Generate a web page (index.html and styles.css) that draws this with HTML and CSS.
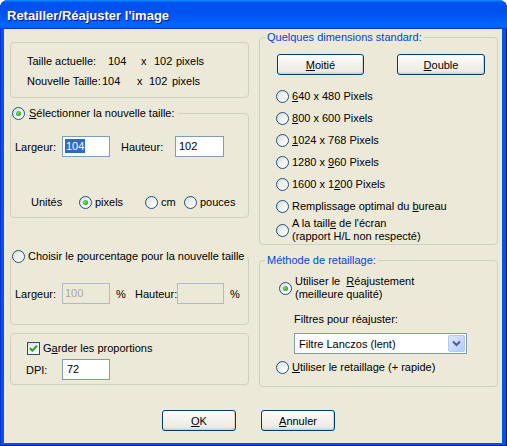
FILE: index.html
```html
<!DOCTYPE html>
<html lang="fr">
<head>
<meta charset="utf-8">
<title>Retailler/Réajuster l'image</title>
<link rel="stylesheet" href="styles.css">
</head>
<body>
<div class="window">
  <div class="titlebar"><span class="title">Retailler/Réajuster l'image</span></div>
  <div class="client">
    <div class="columns">
      <div class="col">
        <div class="box info">
          <div class="info-line">
            <span class="c-lbl1">Taille actuelle:</span><span class="c-n1a">104</span><span class="c-xa">x</span><span class="c-n2a">102</span><span>pixels</span>
          </div>
          <div class="info-line">
            <span class="c-lbl2">Nouvelle Taille:</span><span class="c-n1b">104</span><span class="c-xb">x</span><span class="c-n2b">102</span><span>pixels</span>
          </div>
        </div>

        <div class="box g-select">
          <div class="legend legend-ctl"><span class="radio on"></span><span><u>S</u>électionner la nouvelle taille:</span></div>
          <div class="fieldrow row-size">
            <span class="lbl-larg">Largeur:</span>
            <div class="field w48"><span class="sel">104</span></div>
            <span class="lbl-haut">Hauteur:</span>
            <div class="field w49">102</div>
          </div>
          <div class="units">
            <span class="lbl-units">Unités</span>
            <span class="opt opt-px"><span class="radio on"></span><span>pixels</span></span>
            <span class="opt opt-cm"><span class="radio"></span><span>cm</span></span>
            <span class="opt"><span class="radio"></span><span>pouces</span></span>
          </div>
        </div>

        <div class="box g-percent">
          <div class="legend legend-ctl tight"><span class="radio"></span><span>Choisir le <u>p</u>ourcentage pour la nouvelle taille</span></div>
          <div class="fieldrow row-pct">
            <span class="lbl-larg">Largeur:</span>
            <div class="field w48 disabled">100</div>
            <span class="pct">%</span>
            <span class="lbl-haut2">Hauteur:</span>
            <div class="field w47 disabled"></div>
            <span class="pct2">%</span>
          </div>
        </div>

        <div class="box g-keep">
          <div class="check-row"><span class="checkbox"><svg width="9" height="9" viewBox="0 0 9 9"><path d="M1 4.2 L3.4 6.6 L8 1.8" fill="none" stroke="#21A121" stroke-width="2"/></svg></span><span>G<u>a</u>rder les proportions</span></div>
          <div class="fieldrow row-dpi">
            <span class="lbl-dpi">DPI:</span>
            <div class="field w48 pad3">72</div>
          </div>
        </div>
      </div>

      <div class="col">
        <div class="box g-standard">
          <div class="legend legend-blue">Quelques dimensions standard:</div>
          <div class="btn-row">
            <button class="btn b-half"><u>M</u>oitié</button>
            <button class="btn b-double"><u>D</u>ouble</button>
          </div>
          <div class="radio-list">
            <div class="ropt"><span class="radio"></span><span><u>6</u>40 x 480 Pixels</span></div>
            <div class="ropt"><span class="radio"></span><span><u>8</u>00 x 600 Pixels</span></div>
            <div class="ropt"><span class="radio"></span><span><u>1</u>024 x 768 Pixels</span></div>
            <div class="ropt"><span class="radio"></span><span>1280 x <u>9</u>60 Pixels</span></div>
            <div class="ropt"><span class="radio"></span><span>1600 x 1<u>2</u>00 Pixels</span></div>
            <div class="ropt"><span class="radio"></span><span>Remplissage optimal du <u>b</u>ureau</span></div>
            <div class="ropt two"><span class="radio"></span><span>A la taill<u>e</u> de l'écran<br>(rapport H/L non respecté)</span></div>
          </div>
        </div>

        <div class="box g-method">
          <div class="legend legend-blue">Méthode de retaillage:</div>
          <div class="ropt two m-resize"><span class="radio on"></span><span>Utiliser le&nbsp; <u>R</u>éajustement<br>(meilleure qualité)</span></div>
          <div class="filters-lbl">Filtres pour réajuster:</div>
          <div class="select">
            <span>Filtre Lanczos (lent)</span>
            <span class="drop"><svg width="9" height="7" viewBox="0 0 9 7"><path d="M1 1.5 L4.5 5 L8 1.5" fill="none" stroke="#4D6185" stroke-width="2"/></svg></span>
          </div>
          <div class="ropt m-fast"><span class="radio"></span><span><u>U</u>tiliser le retaillage (+ rapide)</span></div>
        </div>
      </div>
    </div>

    <div class="actions">
      <button class="btn b-action"><u>O</u>K</button>
      <button class="btn b-action"><u>A</u>nnuler</button>
    </div>
  </div>
</div>
</body>
</html>
```

FILE: styles.css
```css
* { box-sizing: border-box; }

html, body {
  margin: 0;
  padding: 0;
  background: #ffffff;
}

body {
  font: 11px "Liberation Sans", Arial, sans-serif;
  color: #000;
}

u { text-decoration: underline; text-underline-offset: 1px; }

.window {
  width: 507px;
  height: 446px;
  background: #0055E5;
  border-radius: 8px 8px 0 0;
  display: flex;
  flex-direction: column;
  overflow: hidden;
  box-shadow: inset 1px 0 #0831D9, inset -1px -1px #00138C;
}

.titlebar {
  height: 29px;
  flex: none;
  padding: 4px 0 0 7px;
  line-height: 25px;
  border-radius: 8px 8px 0 0;
  background: linear-gradient(to bottom, #0997ff, #0053ee 8%, #0050ee 40%, #0066ff 88%, #0066ff 93%, #005bff 95%, #003dd7 96%, #003dd7);
}

.title {
  font: bold 13px "Liberation Sans", Arial, sans-serif;
  color: #fff;
  text-shadow: 1px 1px #0F1089;
  white-space: nowrap;
}

.client {
  flex: 1;
  margin: 0 5px 3px 4px;
  background: #ECE9D8;
}

.columns {
  display: flex;
  gap: 10px;
  padding-left: 6px;
}

.col {
  width: 239px;
  display: flex;
  flex-direction: column;
}

.box {
  border: 1px solid #D0D0BF;
  border-radius: 4px;
  display: flex;
  flex-direction: column;
}

.legend {
  margin-top: -8px;
  height: 14px;
  line-height: 14px;
  align-self: flex-start;
  background: #ECE9D8;
  display: flex;
  align-items: center;
  white-space: nowrap;
}

.legend-ctl {
  margin-left: 1px;
  gap: 4px;
  padding-right: 3px;
}

.legend-ctl.tight { gap: 3px; }

.legend-blue {
  margin-left: 5px;
  padding: 0 2px;
  color: #0046D5;
}

/* radio & checkbox */
.radio {
  width: 13px;
  height: 13px;
  flex: none;
  border-radius: 50%;
  border: 1px solid #1C5180;
  background: linear-gradient(135deg, #DCDCD7, #ffffff 85%);
  display: inline-flex;
  align-items: center;
  justify-content: center;
}

.radio.on::after {
  content: "";
  width: 5px;
  height: 5px;
  border-radius: 50%;
  background: radial-gradient(circle at 40% 40%, #7BE27A, #21A121 75%);
}

.checkbox {
  width: 13px;
  height: 13px;
  flex: none;
  border: 1px solid #1C5180;
  background: linear-gradient(135deg, #DCDCD7, #ffffff 85%);
  display: inline-flex;
  align-items: center;
  justify-content: center;
}

/* text fields */
.field {
  height: 21px;
  flex: none;
  border: 1px solid #7F9DB9;
  background: #fff;
  padding-left: 2px;
  line-height: 19px;
  white-space: nowrap;
}

.field.pad3 { padding-left: 4px; }
.w47 { width: 47px; }
.w48 { width: 48px; }
.w49 { width: 49px; padding-left: 3px; }

.field.disabled {
  background: #ECE9D8;
  border-color: #AFBCC8;
  color: #ACA899;
}

.sel {
  background: #316AC5;
  color: #fff;
  padding: 1px 1px;
}

.fieldrow {
  display: flex;
  align-items: center;
  height: 21px;
  white-space: nowrap;
}

/* info box */
.info {
  margin-top: 13px;
  height: 56px;
  padding: 8px 0 0 16px;
}

.info-line {
  height: 20px;
  line-height: 20px;
  white-space: nowrap;
  display: flex;
}

.c-lbl1 { width: 81px; flex: none; }
.c-n1a { width: 33px; flex: none; }
.c-xa { width: 13px; flex: none; }
.c-n2a { width: 22px; flex: none; }
.c-lbl2 { width: 75px; flex: none; }
.c-n1b { width: 35px; flex: none; }
.c-xb { width: 12px; flex: none; }
.c-n2b { width: 23px; flex: none; }

/* selection group */
.g-select {
  margin-top: 15px;
  height: 105px;
}

.row-size {
  margin-top: 16px;
  padding-left: 4px;
}

.lbl-larg { width: 47px; flex: none; }
.lbl-haut { width: 54px; flex: none; margin-left: 11px; }

.units {
  margin-top: 38px;
  padding-left: 20px;
  height: 14px;
  display: flex;
  align-items: center;
}

.lbl-units { width: 48px; flex: none; }

.opt {
  display: flex;
  align-items: center;
  gap: 3px;
  flex: none;
}

.opt-px { width: 66px; }
.opt-cm { width: 39px; }

/* percent group */
.g-percent {
  margin-top: 38px;
  height: 69px;
}

.row-pct {
  margin-top: 20px;
  padding-left: 4px;
}

.pct { width: 19px; margin-left: 6px; flex: none; }
.lbl-haut2 { width: 42px; flex: none; }
.pct2 { margin-left: 6px; }

/* keep proportions group */
.g-keep {
  margin-top: 8px;
  height: 52px;
  padding-top: 7px;
}

.check-row {
  height: 14px;
  display: flex;
  align-items: center;
  gap: 3px;
  padding-left: 16px;
}

.row-dpi {
  margin-top: 4px;
  padding-left: 15px;
}

.lbl-dpi { width: 36px; flex: none; }

/* standard dimensions */
.g-standard {
  margin-top: 8px;
  height: 208px;
}

.btn-row {
  margin-top: 10px;
  padding-left: 17px;
  display: flex;
  gap: 33px;
}

.btn {
  height: 21px;
  font: 11px "Liberation Sans", Arial, sans-serif;
  color: #000;
  border: 1px solid #003C74;
  border-radius: 3px;
  background: linear-gradient(to bottom, #ffffff, #F4F3EE 40%, #ECEBE6 85%, #D6D0C5);
  box-shadow: inset -1px -1px #D6D0C5;
  padding: 0;
  text-align: center;
}

.b-half { width: 87px; }
.b-double { width: 88px; }
.b-action { width: 74px; }

.radio-list {
  margin-top: 10px;
  display: flex;
  flex-direction: column;
}

.ropt {
  height: 22px;
  display: flex;
  align-items: center;
  gap: 3px;
  padding-left: 16px;
  white-space: nowrap;
}

.ropt.two {
  height: 26px;
  line-height: 13px;
}

/* method group */
.g-method {
  margin-top: 15px;
  height: 127px;
}

.m-resize {
  margin-top: 8px;
  padding-left: 19px;
}

.filters-lbl {
  margin-top: 12px;
  height: 13px;
  line-height: 13px;
  padding-left: 34px;
}

.select {
  margin-top: 7px;
  margin-left: 34px;
  width: 173px;
  height: 21px;
  border: 1px solid #7F9DB9;
  background: #fff;
  display: flex;
  align-items: center;
  padding-left: 4px;
  padding-right: 1px;
}

.drop {
  margin-left: auto;
  width: 17px;
  height: 17px;
  border: 1px solid #B5C8F2;
  border-radius: 2px;
  background: linear-gradient(135deg, #DDE8FE, #B6CBF7);
  display: flex;
  align-items: center;
  justify-content: center;
}

.m-fast {
  margin-top: 6px;
  height: 14px;
}

/* bottom buttons */
.actions {
  margin-top: 23px;
  padding-left: 158px;
  display: flex;
  gap: 25px;
}
```
